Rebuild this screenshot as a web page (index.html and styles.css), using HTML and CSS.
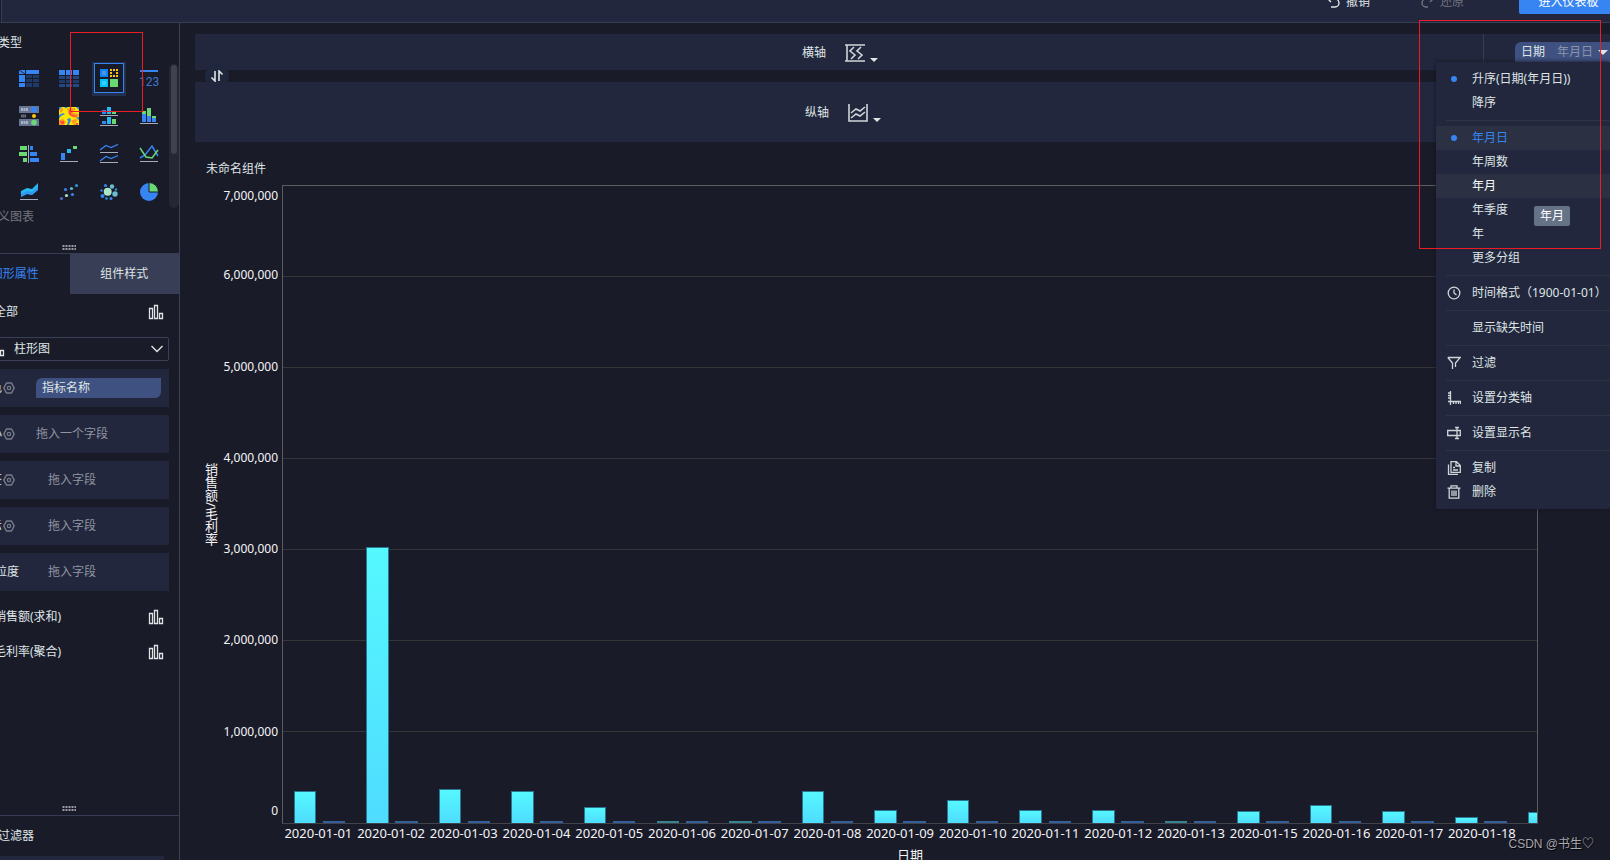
FILE: index.html
```html
<!DOCTYPE html>
<html lang="zh-CN">
<head>
<meta charset="utf-8">
<title>未命名组件</title>
<link rel="stylesheet" href="styles.css">
</head>
<body>
<svg class="defs" width="0" height="0" aria-hidden="true">
  <symbol id="i-bars" viewBox="0 0 16 16"><path d="M1.500 4.500h3v10h-3zM6.500 1.500h3v13h-3zM11.500 9.500h3v5h-3z" fill="none" stroke="currentColor" stroke-width="1.300"/></symbol>
  <symbol id="i-gear" viewBox="0 0 12 12"><path d="M3.500 1h5L11.200 6 8.500 11h-5L.8 6z" fill="none" stroke="currentColor" stroke-width="1.500" stroke-linejoin="round"/><circle cx="6" cy="6" r="1.700" fill="none" stroke="currentColor" stroke-width="1.200"/></symbol>
  <symbol id="i-grip" viewBox="0 0 14 5"><path d="M.5 1h14M.5 4h14" fill="none" stroke="#c3c5cc" stroke-width="1.600" stroke-dasharray="2 1"/></symbol>
</svg>

<header class="topbar">
  <div class="tools">
    <button class="tool"><svg width="16" height="14" viewBox="0 0 16 14"><path d="M5 1L2 4l3 3M2 4h7a4 4 0 0 1 0 8H5"/></svg>撤销</button>
    <button class="tool muted"><svg width="16" height="14" viewBox="0 0 16 14"><path d="M10 1l3 3-3 3M13 4H6a4 4 0 0 0 0 8h2"/></svg>还原</button>
    <button class="enter">进入仪表板</button>
  </div>
</header>

<main class="main">
  <aside class="sidebar">
    <section class="types">
      <h2 class="cut-title">类型</h2>
      <div class="type-grid">
        <button class="type" aria-label="分组表"><svg viewBox="0 0 20 20"><path fill="#3685f2" d="M0 2h6v4H0zM7 2h13v4H7zM0 7h6v7H0zM0 15h6v4H0z"/><path stroke="#1a2b50" d="M0 2l6 4"/><path fill="#1f3a66" d="M7 7h6v3H7zM14 7h6v3h-6zM7 11h6v3H7zM14 11h6v3h-6zM7 15h6v4H7zM14 15h6v4h-6z"/></svg></button>
        <button class="type" aria-label="明细表"><svg viewBox="0 0 20 20"><path fill="#3685f2" d="M0 2h6v5H0zM7 2h6v5H7zM14 2h6v5h-6z"/><path fill="#23487f" d="M0 8h6v3H0zM7 8h6v3H7zM14 8h6v3h-6zM0 16h6v3H0zM7 16h6v3H7zM14 16h6v3h-6z"/><path fill="#1f3a66" d="M0 12h6v3H0zM7 12h6v3H7zM14 12h6v3h-6z"/></svg></button>
        <button class="type selected" aria-label="自定义图表"><svg viewBox="0 0 20 20"><path fill="#0a83f5" d="M1 1h8v8H1z"/><path fill="#4f92ee" d="M3 3h4v4H3z"/><path fill="#ffc30f" d="M11 1h2v2h-2zM14 1h2v2h-2zM17 1h2v2h-2zM11 4h2v2h-2zM17 4h2v2h-2zM11 7h2v2h-2zM14 7h2v2h-2zM17 7h2v2h-2z"/><path fill="#00c3f7" d="M1 11h8v8H1z"/><path fill="#32d0fa" d="M3 13h4v4H3z"/><path fill="#6bd973" d="M11 11h8v8h-8z"/></svg></button>
        <button class="type" aria-label="指标卡"><svg viewBox="0 0 20 20"><path fill="#3685f2" d="M1 2h18v2H1z"/><text class="kpi" x="10" y="18" text-anchor="middle">123</text></svg></button>

        <button class="type" aria-label="表格组件"><svg viewBox="0 0 20 20"><path fill="#687592" d="M0 0h20v7H0zM0 13h20v7H0z"/><path stroke="#a9b2c4" stroke-width="3" stroke-dasharray="2 .5" d="M2 3.500h7M2 16.500h7"/><path stroke="#697080" stroke-width="3" stroke-dasharray="1.500 .3" d="M2 10h5"/><circle cx="15" cy="3.500" r="3" fill="#3685f2"/><circle cx="15" cy="10" r="2" fill="#ffc30f"/><circle cx="15" cy="16.500" r="2.800" fill="#6bd973"/></svg></button>
        <button class="type" aria-label="热力图"><svg viewBox="0 0 20 20"><path fill="#ffe800" d="M0 1h20v18H0z"/><path fill="#ff9a1f" d="M8 3l4-2 3 3-1 3 6 1-1 4-6-1-4-4zM0 14l4-1 3 3-2 3H0zM12 15l4-2 3 1-3 3 1 2h-2zM1 3l3-1v3L1 7z"/><path fill="#3b83e0" d="M0 1h3L0 4zM5 1h4l-2 1.500zM17 1h3v3zM0 9l4-2 2 1-4 2-2 3zM8 13l3-1 1 2-2 5H8l1-4zM17 12l3-1v3z"/><path fill="#ff4d3d" d="M10 4l3 1-1 3 6 2-1 1-5-1-2-2zM1 15h4v3H2zM17 17h2v2h-2zM14 3l2-1v2z"/></svg></button>
        <button class="type" aria-label="多系列柱形图"><svg viewBox="0 0 20 20"><path stroke="#a7adb8" d="M1 9.500h18M1 19.500h18"/><path fill="#3685f2" d="M3 4h4v4H3zM3 15h4v3H3z"/><path fill="#27b8f0" d="M8 1h4v7H8zM8 11h4v7H8z"/><path fill="#6bd973" d="M13 6h4v2h-4zM13 13h4v5h-4z"/></svg></button>
        <button class="type" aria-label="堆积柱形图"><svg viewBox="0 0 20 20"><path stroke="#a7adb8" d="M1 17.500h18"/><path fill="#3685f2" d="M3 8h4v8H3zM8 10h4v6H8zM13 12h4v4h-4z"/><path fill="#6bd973" d="M3 5h4v3H3zM8 2h4v8H8zM13 10h4v2h-4z"/></svg></button>

        <button class="type" aria-label="对比柱状图"><svg viewBox="0 0 20 20"><path stroke="#a7adb8" d="M9.500 1v18"/><path fill="#6bd973" d="M1 2h7v4H1zM0 8h8v4H0zM4 14h4v4H4z"/><path fill="#3685f2" d="M11 2h3v4h-3zM11 8h7v4h-7zM11 14h9v4h-9z"/></svg></button>
        <button class="type" aria-label="瀑布图"><svg viewBox="0 0 20 20"><path stroke="#a7adb8" d="M1 17.500h18"/><path fill="#3685f2" d="M2 9h4v7H2z"/><path fill="#27b8f0" d="M8 5h4v4H8z"/><path fill="#6bd973" d="M14 2h4v3h-4z"/></svg></button>
        <button class="type" aria-label="多系列折线图"><svg viewBox="0 0 20 20"><path stroke="#a7adb8" d="M1 8.500h18M1 18.500h18"/><path fill="none" stroke="#3685f2" stroke-width="1.300" d="M1 6l6-4.500 5 2L19 .5M1 17l6-4.500 5 2 7-3"/></svg></button>
        <button class="type" aria-label="折线图"><svg viewBox="0 0 20 20"><path stroke="#a7adb8" d="M1 17.500h18"/><path fill="none" stroke="#3685f2" stroke-width="1.500" d="M1 14l5-3 7-9 6 10"/><path fill="none" stroke="#6bd973" stroke-width="1.500" d="M1 4l6 9 6 1 6-8"/></svg></button>

        <button class="type" aria-label="面积图"><svg viewBox="0 0 20 20"><path stroke="#a7adb8" d="M1 17.500h18"/><path fill="#27b8f0" d="M2 9l6-3 5 1 6-6v7l-6 5-5-1-6 3z"/><path fill="#3685f2" d="M2 12l6-3 5 1 6-5v3l-6 5-5-1-6 3z" opacity=".6"/></svg></button>
        <button class="type" aria-label="散点图"><svg viewBox="0 0 20 20"><circle cx="2.500" cy="16.500" r="1.600" fill="#4a6ec0"/><circle cx="7.500" cy="13.500" r="1.600" fill="#a5e3c0"/><circle cx="6.500" cy="7.500" r="1.600" fill="#3685f2"/><circle cx="12.500" cy="6.500" r="1.600" fill="#59b9cf"/><circle cx="13.500" cy="12.500" r="1.600" fill="#3685f2"/><circle cx="17.500" cy="3.500" r="1.600" fill="#2f93d8"/></svg></button>
        <button class="type" aria-label="聚合气泡图"><svg viewBox="0 0 20 20"><circle cx="8.700" cy="9.700" r="4" fill="#a9e6c6"/><circle cx="13" cy="4.500" r="2.200" fill="#69bdd0"/><circle cx="16" cy="12" r="2.700" fill="#69bdd0"/><circle cx="3.500" cy="14" r="2" fill="#3685f2"/><circle cx="6.500" cy="3.500" r="1.600" fill="#3685f2"/><circle cx="2.500" cy="8.500" r="1.200" fill="#3685f2"/><circle cx="17" cy="7.500" r="1.200" fill="#2f93d8"/><circle cx="7.500" cy="16.500" r="1.300" fill="#2f93d8"/><circle cx="12" cy="16.500" r="1.500" fill="#3685f2"/></svg></button>
        <button class="type" aria-label="饼图"><svg viewBox="0 0 20 20"><circle cx="10" cy="10" r="9" fill="#3685f2"/><path fill="#6bd973" stroke="#1a1b29" d="M10 10V.500A9.500 9.500 0 0 1 19.500 10z"/></svg></button>
      </div>
      <div class="cut-sub">义图表</div>
      <svg class="grip" width="14" height="5"><use href="#i-grip"/></svg>
      <div class="scroll"><div class="thumb"></div></div>
    </section>

    <div class="tabs" role="tablist">
      <button class="tab on" role="tab">图形属性</button>
      <button class="tab" role="tab">组件样式</button>
    </div>

    <section class="props">
      <div class="metric first"><span>全部</span><svg width="16" height="16"><use href="#i-bars"/></svg></div>
      <div class="select-box">
        <svg class="lead" width="16" height="16"><use href="#i-bars"/></svg>
        <select aria-label="图表类型"><option>柱形图</option></select>
        <svg class="chev" width="14" height="14" viewBox="0 0 14 14"><path d="M1.500 4L7 9.500 12.500 4"/></svg>
      </div>
      <div class="drop"><span class="lab">色</span><svg class="gear" width="12" height="12"><use href="#i-gear"/></svg><button class="chip">指标名称</button></div>
      <div class="drop"><span class="lab">小</span><svg class="gear" width="12" height="12"><use href="#i-gear"/></svg><span class="hint">拖入一个字段</span></div>
      <div class="drop"><span class="lab">签</span><svg class="gear" width="12" height="12"><use href="#i-gear"/></svg><span class="hint">拖入字段</span></div>
      <div class="drop"><span class="lab">示</span><svg class="gear" width="12" height="12"><use href="#i-gear"/></svg><span class="hint">拖入字段</span></div>
      <div class="drop"><span class="lab wide">粒度</span><span class="hint">拖入字段</span></div>
      <div class="metric"><span>销售额(求和)</span><svg width="16" height="16"><use href="#i-bars"/></svg></div>
      <div class="metric"><span>毛利率(聚合)</span><svg width="16" height="16"><use href="#i-bars"/></svg></div>
      <svg class="grip" width="14" height="5"><use href="#i-grip"/></svg>
    </section>

    <section class="filters">
      <h2 class="cut-title">过滤器</h2>
      <div class="filter-box"></div>
    </section>
    <div class="mark mark-left"></div>
  </aside>

  <section class="work">
    <div class="axis">
      <span>横轴</span>
      <button class="axis-btn" aria-label="横轴类型"><svg width="20" height="18" viewBox="0 0 20 18"><path d="M0 1h20M0 17h20M2 1v16M9 3L5 7l5 4-4 4M16 3l-4 4 5 4-4 4"/></svg><i class="caret"></i></button>
      <div class="fields"><button class="field"><span>日期</span><span class="gran">年月日</span><i class="caret"></i></button></div>
    </div>
    <button class="swap" aria-label="交换横纵轴"><svg width="14" height="12" viewBox="0 0 14 12"><path d="M5 1v10L1.500 7.500M9 11V1l3.500 3.500" /></svg></button>
    <div class="axis tall">
      <span>纵轴</span>
      <button class="axis-btn" aria-label="纵轴类型"><svg width="20" height="18" viewBox="0 0 20 18"><path d="M1 0v17h18V0M3 9l5-4 4 2 5-4M3 14l5-4 4 2 5-4"/></svg><i class="caret"></i></button>
    </div>

    <h1 class="name">未命名组件</h1>

    <div class="chart">
      <div class="y-title">销售额/毛利率</div>
      <div class="y-axis">
        <div><span>7,000,000</span></div><div><span>6,000,000</span></div><div><span>5,000,000</span></div><div><span>4,000,000</span></div><div><span>3,000,000</span></div><div><span>2,000,000</span></div><div><span>1,000,000</span><span class="zero">0</span></div>
      </div>
      <div class="plot">
        <div class="lines"><i></i><i></i><i></i><i></i><i></i><i></i><i></i></div>
        <div class="bars">
          <div class="slot"><b style="height:5%"></b><u></u></div>
          <div class="slot"><b style="height:43.4%"></b><u></u></div>
          <div class="slot"><b style="height:5.4%"></b><u></u></div>
          <div class="slot"><b style="height:5%"></b><u></u></div>
          <div class="slot"><b style="height:2.5%"></b><u></u></div>
          <div class="slot"><b class="flat"></b><u></u></div>
          <div class="slot"><b class="flat"></b><u></u></div>
          <div class="slot"><b style="height:5%"></b><u></u></div>
          <div class="slot"><b style="height:2%"></b><u></u></div>
          <div class="slot"><b style="height:3.6%"></b><u></u></div>
          <div class="slot"><b style="height:2.1%"></b><u></u></div>
          <div class="slot"><b style="height:2.1%"></b><u></u></div>
          <div class="slot"><b class="flat"></b><u></u></div>
          <div class="slot"><b style="height:1.9%"></b><u></u></div>
          <div class="slot"><b style="height:2.8%"></b><u></u></div>
          <div class="slot"><b style="height:1.9%"></b><u></u></div>
          <div class="slot"><b style="height:.9%"></b><u></u></div>
          <div class="slot"><b style="height:1.7%"></b><u></u></div>
        </div>
      </div>
      <div class="x-axis">
        <span>2020-01-01</span><span>2020-01-02</span><span>2020-01-03</span><span>2020-01-04</span><span>2020-01-05</span><span>2020-01-06</span><span>2020-01-07</span><span>2020-01-08</span><span>2020-01-09</span><span>2020-01-10</span><span>2020-01-11</span><span>2020-01-12</span><span>2020-01-13</span><span>2020-01-15</span><span>2020-01-16</span><span>2020-01-17</span><span>2020-01-18</span>
      </div>
      <div class="x-title">日期</div>
    </div>

    <div class="menu" role="menu">
      <button class="item" role="menuitem"><i class="dot"></i>升序(日期(年月日))</button>
      <button class="item" role="menuitem">降序</button>
      <hr>
      <button class="item lit active" role="menuitem"><i class="dot"></i>年月日</button>
      <button class="item" role="menuitem">年周数</button>
      <button class="item lit hover" role="menuitem">年月</button>
      <button class="item" role="menuitem">年季度</button>
      <button class="item" role="menuitem">年</button>
      <button class="item" role="menuitem">更多分组</button>
      <hr>
      <button class="item" role="menuitem"><svg viewBox="0 0 14 14"><circle cx="7" cy="7" r="5.800"/><path d="M7 3.500V7l2.500 2"/></svg>时间格式（1900-01-01）</button>
      <hr>
      <button class="item" role="menuitem">显示缺失时间</button>
      <hr>
      <button class="item" role="menuitem"><svg viewBox="0 0 14 14"><path d="M.8 1.500h12.400L8.500 7v4M5.500 13V7L.8 1.500"/></svg>过滤</button>
      <hr>
      <button class="item" role="menuitem"><svg viewBox="0 0 14 14"><path d="M3.500 0v14M1 10.500h13M1 2h2M1 4.500h2M1 7h2M6.500 11v2M9 11v2M11.500 11v2M13.500 10v3"/></svg>设置分类轴</button>
      <hr>
      <button class="item" role="menuitem"><svg viewBox="0 0 14 14"><path d="M8 4.500H.7v5H8M12 4.500h1.300v5H12M10 1.500v11M8 1.500h4M8 12.500h4M8 4.500h4M8 9.500h4"/></svg>设置显示名</button>
      <hr>
      <button class="item" role="menuitem"><svg viewBox="0 0 14 14"><path d="M4 .7h5.500l3.800 3.800v6.800H4zM9 1v4h4M6 6.500h2M6 9h5M1.500 3.500v9.800H11"/></svg>复制</button>
      <button class="item" role="menuitem"><svg viewBox="0 0 14 14"><path d="M.5 3.200h13M4 3V.8h6V3M2.200 3.500v9.700h9.600V3.500M5 5.500v5.500M7 5.500v5.500M9 5.500v5.500"/></svg>删除</button>
      <div class="tip" role="tooltip">年月</div>
    </div>
    <div class="mark mark-right"></div>
    <div class="sign">CSDN @书生♡</div>
  </section>
</main>
</body>
</html>
```
FILE: styles.css
```css
* { box-sizing: border-box; }
body {
  margin: 0;
  height: 100vh;
  display: flex;
  flex-direction: column;
  overflow: hidden;
  background: #1a1b29;
  color: #dfe5e5;
  font: 12px/20px "Noto Sans", "Noto Sans CJK SC", sans-serif;
}
h1, h2 { margin: 0; font-size: 12px; font-weight: 400; }
button, select {
  font: inherit;
  color: inherit;
  background: none;
  border: 0;
  padding: 0;
  margin: 0;
}
svg { display: block; flex: none; }
.defs { position: absolute; }

/* top bar */
.topbar {
  flex: none;
  height: 23px;
  background: #22273d;
  border-bottom: 1px solid #363d55;
  border-left: 1px solid #1a1b29;
  box-shadow: inset 1px 0 0 #363d55;
}
.tools {
  display: flex;
  justify-content: flex-end;
  margin: -10px -10px 0 0;
}
.tool {
  display: flex;
  align-items: center;
  gap: 4px;
  height: 24px;
  margin-right: 50px;
}
.tool.muted { color: #70747f; margin-right: 55px; }
.tool svg { fill: none; stroke: currentColor; stroke-width: 1.4; }
.enter {
  width: 101px;
  height: 24px;
  padding-right: 2px;
  border-radius: 2px;
  background: #3685f2;
  color: #fff;
}

.main { flex: 1; min-height: 0; display: flex; }

/* sidebar, scrolled partly past the left edge */
.sidebar {
  position: relative;
  flex: none;
  width: 220px;
  margin-left: -40px;
  display: flex;
  flex-direction: column;
  border-right: 1px solid #3c4054;
}
.cut-title { padding-left: 38px; }
.types { position: relative; padding-top: 10px; border-bottom: 1px solid #363d55; }
.type-grid {
  display: grid;
  grid-template-columns: repeat(4, 40px);
  grid-auto-rows: 38px;
  place-items: center;
  margin: 6px 0 0 49px;
}
.type { width: 30px; height: 30px; display: grid; place-items: center; }
.type svg { width: 20px; height: 20px; }
.type.selected { border: 1px solid #3685f2; box-shadow: 0 1px 0 2px #22304f; }
.kpi { font: 12px "Liberation Sans Narrow", Roboto, sans-serif; fill: #3a78cf; }
.cut-sub { padding-left: 38px; line-height: 12px; color: #74767f; }
.grip { margin: 22px auto 3px 102px; }
.scroll {
  position: absolute;
  top: 41px;
  right: 0;
  width: 10px;
  height: 144px;
  padding: 1px 2px;
  border-radius: 5px;
  background: #252734;
}
.thumb { height: 89px; border-radius: 3px; background: #3f414e; }

.tabs { display: flex; }
.tab { flex: 1; height: 40px; background: #383e56; }
.tab.on { background: none; color: #3685f2; }

.props {
  flex: 1;
  display: flex;
  flex-direction: column;
  padding-left: 10px;
  border-bottom: 1px solid #363d55;
}
.metric {
  display: flex;
  justify-content: space-between;
  align-items: center;
  height: 35px;
  padding: 0 15px 0 24px;
}
.metric.first { margin-bottom: 8px; }
.select-box {
  position: relative;
  display: flex;
  align-items: center;
  height: 24px;
  margin: 0 10px 8px 0;
  border: 1px solid #3a4058;
  border-radius: 2px;
}
.select-box select { appearance: none; flex: 1; padding-left: 9px; height: 22px; }
.select-box .lead { margin-left: 18px; }
.chev { position: absolute; right: 4px; fill: none; stroke: #dfe5e5; stroke-width: 1.4; pointer-events: none; }
.drop {
  display: flex;
  align-items: center;
  height: 38px;
  margin: 0 10px 8px 0;
  padding-right: 8px;
  background: #22273d;
}
.lab { width: 32px; text-align: right; }
.lab.wide { width: 49px; margin-right: 17px; }
.gear { color: #777c8a; margin: 0 21px 0 1px; }
.chip {
  flex: 1;
  height: 20px;
  padding-left: 6px;
  text-align: left;
  background: #3e5180;
  border-radius: 6px 0 6px 0;
}
.hint { width: 72px; text-align: center; color: #9095a2; }
.props .grip { margin: auto auto 4px 92px; }
.filters { height: 44px; padding-top: 10px; }
.filter-box { height: 30px; margin: 10px 15px 0 10px; background: #22273d; }

/* axis shelves */
.work {
  position: relative;
  flex: 1;
  min-width: 0;
  display: flex;
  flex-direction: column;
  padding: 11px 0 0 15px;
}
.axis {
  position: relative;
  display: flex;
  flex: none;
  align-items: center;
  justify-content: center;
  gap: 19px;
  height: 36px;
  margin-bottom: 12px;
  padding: 1px 125px 0 0;
  background: #22273d;
}
.axis.tall { height: 60px; margin-bottom: 15px; padding: 2px 119px 0 0; }
.axis-btn { display: flex; align-items: flex-end; gap: 5px; }
.axis-btn svg { fill: none; stroke: #cfd6d8; stroke-width: 1.6; }
.caret { border: 4px solid transparent; border-top-color: #dfe5e5; border-bottom: 0; }
.fields {
  position: absolute;
  top: 0;
  right: 0;
  width: 127px;
  height: 36px;
  padding: 8px 0 0 31px;
  border-left: 1px solid #363d55;
  overflow: hidden;
}
.field {
  display: flex;
  align-items: center;
  width: 110px;
  height: 20px;
  padding-left: 6px;
  border-radius: 6px 0 0 0;
  background: #3e5180;
}
.gran { margin: 0 5px 0 12px; color: #8a93ab; }
.field .caret { border-width: 5px 5px 0; }
.swap {
  position: absolute;
  top: 41px;
  left: 25px;
  width: 24px;
  height: 24px;
  display: grid;
  place-items: center;
  border-radius: 50%;
  background: #1e273b;
}
.swap svg { fill: none; stroke: #dfe5e5; stroke-width: 1.6; }
.name { padding-left: 11px; line-height: 24px; margin-bottom: 4px; }

/* chart */
.chart {
  flex: 1;
  min-height: 0;
  display: grid;
  grid-template-columns: 15px 60px 1fr;
  grid-template-rows: 1fr 19px 17px;
  padding: 0 72px 0 8px;
  column-gap: 2px;
  color: #f4f4f6;
}
.y-title {
  writing-mode: vertical-rl;
  text-align: center;
  font-size: 13px;
  line-height: 15px;
}
.y-axis {
  display: grid;
  grid-template-rows: repeat(7, 1fr);
  text-align: right;
  padding-right: 2px;
}
.y-axis div { display: flex; flex-direction: column; justify-content: space-between; margin-top: -11px; }
.y-axis div:first-child { margin-top: 1px; }
.zero { margin-bottom: 3px; }
.plot {
  position: relative;
  display: grid;
  border: 1px solid #5c5d60;
  border-bottom-color: #424349;
  overflow: hidden;
}
.lines, .bars { grid-area: 1 / 1; min-width: 0; }
.lines { display: grid; grid-template-rows: repeat(7, 1fr); }
.lines i { border-bottom: 1px solid #353639; }
.lines i:last-child { border: 0; }
.bars { display: flex; position: relative; }
.slot {
  flex: 0 0 5.79%;
  display: flex;
  align-items: flex-end;
  justify-content: center;
  gap: 9%;
}
.slot b, .slot u { width: 31%; }
.slot b {
  background: linear-gradient(#55f8ff, #4fdcff);
  border: solid #2b7791;
  border-width: 1px 1px 0;
}
.slot .flat { height: 2px; background: #37838f; border: 0; }
.slot u { height: 2px; background: #35609e; }
.x-axis { grid-column: 3; display: flex; font-size: 13px; line-height: 18px; }
.x-axis span {
  flex: 0 0 5.79%;
  display: flex;
  justify-content: center;
  white-space: nowrap;
}
.x-title { grid-column: 3; text-align: center; font-size: 13px; line-height: 24px; }

/* context menu */
.menu {
  position: absolute;
  top: 39px;
  right: 0;
  width: 174px;
  padding: 5px 0;
  background: #22273d;
  border-radius: 2px;
  box-shadow: 0 0 4px #14151f;
}
.menu hr { margin: 5px 0 5px 10px; border: 0; border-top: 1px solid #2e3348; }
.item {
  position: relative;
  display: block;
  width: 100%;
  height: 24px;
  padding-left: 36px;
  text-align: left;
  white-space: nowrap;
}
.item svg {
  position: absolute;
  left: 11px;
  top: 5px;
  width: 14px;
  height: 14px;
  fill: none;
  stroke: #cfd6d8;
  stroke-width: 1.3;
}
.dot {
  position: absolute;
  left: 15px;
  top: 9px;
  width: 6px;
  height: 6px;
  border-radius: 50%;
  background: #3685f2;
}
.lit { background: #2b3043; }
.active { color: #3685f2; }
.hover { color: #fff; }
.tip {
  position: absolute;
  top: 144px;
  left: 98px;
  padding: 0 6px;
  border-radius: 2px;
  background: #667286;
  color: #fff;
}

/* annotations over the screen */
.mark { position: absolute; border: 1px solid #ed1c24; pointer-events: none; }
.mark-left { top: 9px; left: 110px; width: 73px; height: 80px; }
.mark-right { top: -3px; right: 9px; width: 182px; height: 229px; }
.sign {
  position: absolute;
  right: 16px;
  bottom: 6px;
  font: 12px/20px "Liberation Sans", "Noto Sans CJK SC", "DejaVu Sans", sans-serif;
  color: #a6a6ac;
  text-shadow: 1px 1px 1px #000;
}
```
